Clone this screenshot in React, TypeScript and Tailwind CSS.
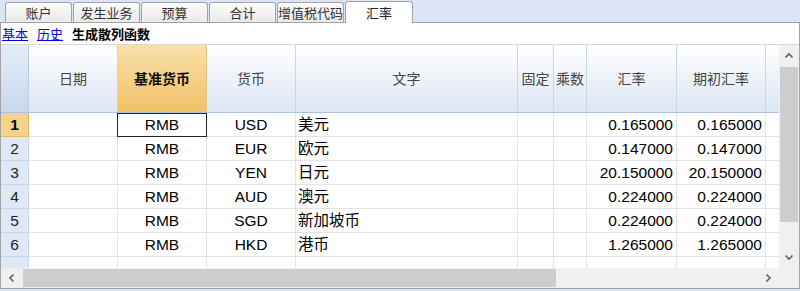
import React from "react";

interface Column {
  key: string;
  label: string;
  width: string;
  align: string;
  highlight?: boolean;
}

const columns: Column[] = [
  { key: "date", label: "日期", width: "w-[89px]", align: "justify-center" },
  { key: "base", label: "基准货币", width: "w-[89px]", align: "justify-center", highlight: true },
  { key: "cur", label: "货币", width: "w-[89px]", align: "justify-center" },
  { key: "text", label: "文字", width: "w-[222px]", align: "justify-start pl-[2px]" },
  { key: "fixed", label: "固定", width: "w-[36px]", align: "justify-center" },
  { key: "mult", label: "乘数", width: "w-[33px]", align: "justify-center" },
  { key: "rate", label: "汇率", width: "w-[90px]", align: "justify-end pr-[3px]" },
  { key: "open", label: "期初汇率", width: "w-[89px]", align: "justify-end pr-[3px]" },
  { key: "extra", label: "", width: "w-[40px]", align: "justify-center" },
];

type Row = Record<string, string>;

const rows: Row[] = [
  { base: "RMB", cur: "USD", text: "美元", rate: "0.165000", open: "0.165000" },
  { base: "RMB", cur: "EUR", text: "欧元", rate: "0.147000", open: "0.147000" },
  { base: "RMB", cur: "YEN", text: "日元", rate: "20.150000", open: "20.150000" },
  { base: "RMB", cur: "AUD", text: "澳元", rate: "0.224000", open: "0.224000" },
  { base: "RMB", cur: "SGD", text: "新加坡币", rate: "0.224000", open: "0.224000" },
  { base: "RMB", cur: "HKD", text: "港币", rate: "1.265000", open: "1.265000" },
  {},
];

const tabs = ["账户", "发生业务", "预算", "合计", "增值税代码"];

function Chevron({ dir }: { dir: "up" | "down" | "left" | "right" }) {
  const rot = { up: 0, right: 90, down: 180, left: 270 }[dir];
  return (
    <svg width="10" height="10" viewBox="0 0 10 10" style={{ transform: `rotate(${rot}deg)` }}>
      <path d="M1.5 6.5 L5 3 L8.5 6.5" fill="none" stroke="#606060" strokeWidth="1.6" />
    </svg>
  );
}

export default function App() {
  return (
    <div className="w-[800px] h-[291px] bg-[#dbe5f7] flex flex-col overflow-hidden font-['Liberation_Sans','Noto_Sans_CJK_SC',sans-serif] text-black">
      {/* tabs */}
      <div className="h-[23px] flex items-end pl-[5px] gap-[1px] shrink-0">
        {tabs.map((t) => (
          <div
            key={t}
            className="w-[67px] h-[20px] mb-px rounded-t-[3px] border border-b-0 border-[#a3a3a3] bg-gradient-to-b from-[#fdfdfd] to-[#e9e9e9] flex items-center justify-center text-[13px] text-[#333] font-['Noto_Sans_CJK_SC',sans-serif] leading-none"
          >
            {t}
          </div>
        ))}
        <div className="w-[68px] h-[22px] rounded-t-[3px] border border-b-0 border-[#a3a3a3] bg-white flex items-center justify-center text-[13px] text-[#222] font-['Noto_Sans_CJK_SC',sans-serif] leading-none relative z-10">
          汇率
        </div>
      </div>

      {/* content */}
      <div className="h-[267px] -mt-px bg-white border border-[#a3a3a3] flex flex-col shrink-0">
        <div className="h-[21px] flex items-center gap-[9px] pl-[1px] text-[13px] font-['Noto_Sans_CJK_SC',sans-serif] leading-none">
          <span className="text-[#0000ee] underline">基本</span>
          <span className="text-[#0000ee] underline">历史</span>
          <span className="font-bold">生成散列函数</span>
        </div>

        <div className="flex-1 flex flex-col border-t border-[#d8d8d8] min-h-0">
          <div className="flex-1 flex min-h-0">
            {/* table */}
            <div className="flex-1 overflow-hidden flex flex-col">
              <div className="h-[68px] flex shrink-0 border-b border-[#a9c1e2]">
                <div className="w-[28px] shrink-0 border-r border-[#b9cce6] bg-gradient-to-b from-[#e4ecf8] to-[#c9d8ee]" />
                {columns.map((c) => (
                  <div
                    key={c.key}
                    className={`${c.width} shrink-0 border-r flex items-center justify-center text-[14px] font-['Noto_Sans_CJK_SC',sans-serif] ${
                      c.highlight
                        ? "border-[#e6c27e] bg-gradient-to-b from-[#f9dfa8] to-[#f1c164] font-bold text-[#111]"
                        : "border-[#c6d6ec] bg-gradient-to-b from-white to-[#dde6f3] text-[#444]"
                    }`}
                  >
                    {c.label}
                  </div>
                ))}
              </div>

              {rows.map((r, i) => (
                <div key={i} className="h-[24px] flex shrink-0">
                  <div
                    className={`w-[28px] shrink-0 border-r border-b flex items-center justify-center text-[15.5px] ${
                      i === 0
                        ? "bg-[#f8d28c] border-[#e8b960] font-bold"
                        : "bg-[#dee8f6] border-[#c5d6ec] text-[#222]"
                    }`}
                  >
                    {i < 6 ? i + 1 : ""}
                  </div>
                  {columns.map((c) => (
                    <div
                      key={c.key}
                      className={`${c.width} shrink-0 flex items-center text-[15.5px] leading-none ${c.align} ${
                        i === 0 && c.highlight
                          ? "border border-[#222] -ml-px"
                          : "border-r border-b border-[#e3e3e3]"
                      } ${i === 0 && c.highlight ? "w-[90px]" : ""}`}
                    >
                      {r[c.key] ?? ""}
                    </div>
                  ))}
                </div>
              ))}
            </div>

            {/* vertical scrollbar */}
            <div className="w-[20px] shrink-0 bg-[#f0f0f0] flex flex-col items-center">
              <div className="h-[22px] w-full flex items-center justify-center">
                <Chevron dir="up" />
              </div>
              <div className="w-[18px] h-[155px] bg-[#cdcdcd]" />
              <div className="flex-1" />
              <div className="h-[22px] w-full flex items-center justify-center">
                <Chevron dir="down" />
              </div>
            </div>
          </div>

          {/* horizontal scrollbar */}
          <div className="h-[20px] flex shrink-0 bg-[#f0f0f0]">
            <div className="w-[22px] flex items-center justify-center">
              <Chevron dir="left" />
            </div>
            <div className="flex-1 flex items-center">
              <div className="w-[533px] h-[18px] bg-[#cdcdcd]" />
            </div>
            <div className="w-[22px] flex items-center justify-center">
              <Chevron dir="right" />
            </div>
            <div className="w-[20px] bg-[#f0f0f0]" />
          </div>
        </div>
      </div>
    </div>
  );
}
